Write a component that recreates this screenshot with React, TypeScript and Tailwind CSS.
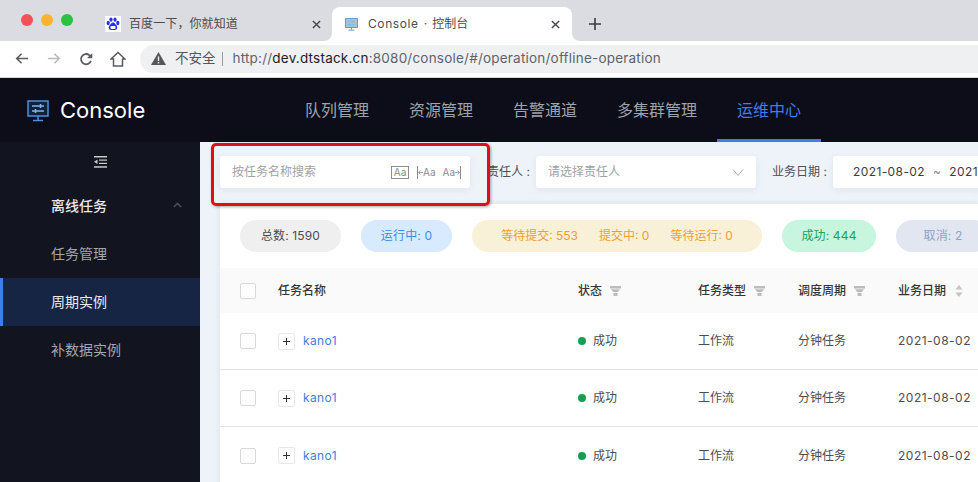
const CJK = "font-['Inter','Noto_Sans_CJK_SC',sans-serif]";

function MonitorIcon({ size }: { size: number }) {
  return (
    <svg width={size} height={size} viewBox="0 0 22 22" fill="none" stroke="#4a90e2" strokeWidth="1.5">
      <rect x="1" y="1" width="20" height="15" fill="#1f4a7a" fillOpacity="0.35" />
      <path d="M5 6h12M5 11h12" stroke="#7fb8f0" />
      <path d="M13.5 4v4M8.5 9v4" stroke="#7fb8f0" />
      <path d="M11 16v4M6 20.5h10" />
    </svg>
  );
}

function CloseIcon() {
  return (
    <svg width="9" height="9" viewBox="0 0 10 10" stroke="currentColor" strokeWidth="1.6"><path d="M1 1l8 8M9 1l-8 8" /></svg>
  );
}

function Tabs() {
  return (
    <div className="h-[41px] bg-[#dadce1] flex items-end relative">
      <div className="flex items-center gap-[8px] pl-[21px] absolute top-[14px] left-0">
        <span className="w-3 h-3 rounded-full bg-[#f4505a]" />
        <span className="w-3 h-3 rounded-full bg-[#fbb32f]" />
        <span className="w-3 h-3 rounded-full bg-[#2bc142]" />
      </div>
      <div className="ml-[105px] w-[227px] h-[34px] flex items-center text-[#4a4c50]">
        <svg width="16" height="16" viewBox="0 0 16 16" className="shrink-0">
          <rect width="16" height="16" fill="#fff" />
          <ellipse cx="3.2" cy="7" rx="1.6" ry="2.2" fill="#2932e1" />
          <ellipse cx="6" cy="3.6" rx="1.6" ry="2.2" fill="#2932e1" />
          <ellipse cx="10" cy="3.6" rx="1.6" ry="2.2" fill="#2932e1" />
          <ellipse cx="12.8" cy="7" rx="1.6" ry="2.2" fill="#2932e1" />
          <path d="M8 6.500c-2 0-2.200 2-3.500 3-1.400 1.200-.8 4.500 1.500 4.500h4c2.300 0 2.900-3.300 1.500-4.500-1.300-1-1.500-3-3.500-3z" fill="#2932e1" />
          <rect x="5.500" y="10" width="5" height="3" rx="1" fill="#fff" />
        </svg>
        <span className={`ml-[8px] text-[12px] tracking-[0.1px] ${CJK}`}>百度一下，你就知道</span>
        <span className="ml-auto mr-[11px] text-[#45474a]"><CloseIcon /></span>
      </div>
      <div className="relative w-[240px] h-[34px] bg-white rounded-t-[8px] flex items-center pl-[13px] text-[#4a4c50]">
        {/* the two little flares at the foot of the active tab */}
        <span className="absolute -left-[8px] bottom-0 w-[8px] h-[8px] bg-white"><span className="block w-full h-full bg-[#dadce1] rounded-br-[8px]" /></span>
        <span className="absolute -right-[8px] bottom-0 w-[8px] h-[8px] bg-white"><span className="block w-full h-full bg-[#dadce1] rounded-bl-[8px]" /></span>
        <MonitorIcon size={13} />
        <span className={`ml-[10px] text-[12px] whitespace-nowrap ${CJK}`}>
          <span className="tracking-[0.6px]">Console</span>
          <span className="mx-[5px]">·</span>
          <span>控制台</span>
        </span>
        <span className="ml-auto mr-[12px] text-[#45474a]"><CloseIcon /></span>
      </div>
      <div className="h-[34px] w-[13px] flex items-center justify-center ml-[16px] text-[#3a3c40]">
        <svg width="12" height="12" viewBox="0 0 12 12" stroke="currentColor" strokeWidth="1.600"><path d="M6 0v12M0 6h12" /></svg>
      </div>
    </div>
  );
}

function Toolbar() {
  return (
    <div className="h-[37px] bg-white border-b border-b-[#d4d5d7] flex items-center pb-[1px]">
      <div className="flex items-center w-[140px] pl-[15px] text-[#5a5c60]">
        <svg width="14" height="13" viewBox="0 0 16 14" fill="none" stroke="currentColor" strokeWidth="1.800"><path d="M15 7H2M7.500 1.500L2 7l5.500 5.500" /></svg>
        <svg className="ml-[18px]" width="14" height="13" viewBox="0 0 16 14" fill="none" stroke="#b9babc" strokeWidth="1.800"><path d="M1 7h13M8.500 1.500L14 7l-5.500 5.500" /></svg>
        <svg className="ml-[18px]" width="14" height="14" viewBox="0 0 15 15" fill="none" stroke="currentColor" strokeWidth="1.900"><path d="M12.800 9.500A5.500 5.500 0 1 1 11 3.300L13 5.500" /><path d="M14.200 1v5.700H8.500z" fill="currentColor" stroke="none" /></svg>
        <svg className="ml-[17px]" width="16" height="16" viewBox="0 0 16 16" fill="none" stroke="currentColor" strokeWidth="1.500"><path d="M1 8l7-6.500L15 8h-2.500v7h-9V8z" /></svg>
      </div>
      <div className={`w-[838px] h-[28px] bg-[#eff0f2] rounded-l-[14px] flex items-center pl-[11px] text-[13.500px] ${CJK}`}>
        <svg width="15" height="13" viewBox="0 0 15 13"><path d="M7.500 0L15 13H0z" fill="#55575a" /><rect x="6.800" y="4.500" width="1.400" height="4.500" fill="#eff0f2" /><rect x="6.800" y="10" width="1.400" height="1.400" fill="#eff0f2" /></svg>
        <span className="ml-[9px] text-[#55575a] text-[13.500px]">不安全</span>
        <span className="w-px h-[14px] bg-[#9a9b9e] ml-[6px] mr-[10px]" />
        <span className="text-[#5f6368] tracking-[0.21px]">http://<span className="text-[#202124]">dev.dtstack.cn</span>:8080/console/#/operation/offline-operation</span>
      </div>
    </div>
  );
}

function AppHeader() {
  const items = ["队列管理", "资源管理", "告警通道", "多集群管理"];
  return (
    <div className="h-[64px] bg-[#0c0d19] flex relative">
      <div className="flex items-center w-[285px] pl-[27px] pt-[1px]">
        <MonitorIcon size={22} />
        <span className="ml-[11px] text-white text-[22px] font-['Inter',sans-serif]">Console</span>
      </div>
      {items.map((t) => (
        <div key={t} className={`px-[20px] flex items-center text-[16px] text-[#9ea3ac] ${CJK}`}>{t}</div>
      ))}
      <div className={`px-[20px] flex items-center pt-[3px] text-[16px] text-[#3f7ee8] border-b-[3px] border-b-[#3f7ee8] ${CJK}`}>运维中心</div>
    </div>
  );
}

function Sidebar() {
  return (
    <div className={`w-[200px] shrink-0 bg-[#12141f] text-[14px] ${CJK}`}>
      <div className="h-[40px] flex items-center justify-center pb-[1px]">
        <svg width="13" height="12" viewBox="0 0 13 12" fill="#c9cacd">
          <rect width="13" height="1.500" />
          <rect x="5" y="3.500" width="8" height="1.200" />
          <rect x="5" y="6.800" width="8" height="1.200" />
          <rect y="10.200" width="13" height="1.500" />
          <path d="M3.500 3.500v4.500L0 5.800z" />
        </svg>
      </div>
      <div className="h-[48px] flex items-center pl-[51px] pr-[18px] pb-[2px] text-[#e6e7ea] font-medium">
        <span>离线任务</span>
        <svg className="ml-auto" width="9" height="6" viewBox="0 0 9 6" fill="none" stroke="#4f525c" strokeWidth="1.500"><path d="M.800 5L4.500 1.500 8.200 5" /></svg>
      </div>
      <div className="h-[48px] flex items-center pl-[51px] pb-[2px] text-[#a4a6ab]">任务管理</div>
      <div className="h-[48px] flex items-center pl-[48px] pb-[2px] text-[#e8eaee] bg-[#162544] border-l-[3px] border-l-[#3f7ee8]">周期实例</div>
      <div className="h-[48px] flex items-center pl-[51px] pb-[2px] text-[#a4a6ab]">补数据实例</div>
    </div>
  );
}

function ArrowTick({ flip }: { flip?: boolean }) {
  return (
    <svg width="5" height="5" viewBox="0 0 5 5" fill="none" stroke="#8b8d91" strokeWidth="0.8" className={flip ? "rotate-180" : ""}>
      <path d="M5 2.500H.5M2.500.5l-2 2 2 2" />
    </svg>
  );
}

function Filters() {
  return (
    <div className={`h-[62px] flex items-start pt-[14px] pl-[20px] text-[12px] ${CJK}`}>
      <div className="w-[250px] h-[32px] shrink-0 bg-white rounded-[3px] shadow-[0_2px_6px_rgba(120,140,170,0.12)] flex items-center pl-[12px] pr-[9px] text-[#a0a2a6]">
        <span>按任务名称搜索</span>
        <div className="ml-auto flex items-center text-[#8b8d91] font-['Inter',sans-serif] text-[10px] leading-none">
          <span className="w-[18px] h-[13px] border border-[#8b8d91] flex items-center justify-center">Aa</span>
          <span className="ml-[8px] w-[19px] h-[13px] border-l border-l-[#8b8d91] flex items-center"><ArrowTick />Aa</span>
          <span className="ml-[6px] w-[19px] h-[13px] border-r border-r-[#8b8d91] flex items-center justify-end">Aa<ArrowTick flip /></span>
        </div>
      </div>
      <span className="ml-[17px] w-[49px] shrink-0 h-[32px] flex items-center text-[#4d4f53]">责任人 :</span>
      <div className="w-[220px] h-[32px] shrink-0 bg-white rounded-[3px] shadow-[0_2px_6px_rgba(120,140,170,0.12)] flex items-center pl-[12px] pr-[12px] text-[#a0a2a6]">
        <span>请选择责任人</span>
        <svg className="ml-auto" width="12" height="7" viewBox="0 0 12 7" fill="none" stroke="#a8a9ad" strokeWidth="1"><path d="M1 .500l5 6 5-6" /></svg>
      </div>
      <span className="ml-[16px] h-[32px] w-[61px] shrink-0 flex items-center text-[#4d4f53] whitespace-nowrap">业务日期 :</span>
      <div className="w-[200px] h-[32px] shrink-0 bg-white rounded-[3px] shadow-[0_2px_6px_rgba(120,140,170,0.12)] flex items-center pl-[20px] text-[#3a3c40] whitespace-nowrap tracking-[0.4px]">
        <span>2021-08-02</span><span className="mx-[8px] text-[#8b8d91]">~</span><span>2021-08-02</span>
      </div>
    </div>
  );
}

function Pill({ cls, children }: { cls: string; children: React.ReactNode }) {
  return <div className={`h-[32px] rounded-full flex items-center justify-center shrink-0 whitespace-nowrap ${cls}`}>{children}</div>;
}

function Pills() {
  return (
    <div className={`h-[64px] flex items-center pl-[20px] gap-[20px] text-[12px] ${CJK}`}>
      <Pill cls="w-[101px] bg-[#efefef] text-[#4c4d50] tracking-[0.15px]">总数: 1590</Pill>
      <Pill cls="w-[91px] bg-[#d8eafd] text-[#3d8de8] tracking-[0.15px]">运行中: 0</Pill>
      <Pill cls="w-[290px] bg-[#f9f0d8] text-[#efa030] gap-[21px]">
        <span>等待提交: 553</span><span>提交中: 0</span><span>等待运行: 0</span>
      </Pill>
      <Pill cls="w-[94px] bg-[#c7f5de] text-[#16a35e] tracking-[0.15px]">成功: 444</Pill>
      <Pill cls="w-[94px] bg-[#e1e6f1] text-[#8fa3c4] tracking-[0.15px]">取消: 2</Pill>
    </div>
  );
}

function Funnel() {
  return (
    <svg width="11" height="10" viewBox="0 0 11 10" fill="#bcbcbc" className="ml-[8px]">
      <rect width="11" height="2.500" />
      <path d="M1 3.200h9L7.800 6H3.200z" />
      <rect x="3.500" y="6.800" width="4" height="3.200" />
    </svg>
  );
}

const colCls = "flex items-center shrink-0";

function TableHead() {
  return (
    <div className="h-[45px] bg-[#fafafa] flex items-center text-[12px] text-[#333538] font-medium">
      <div className="w-[58px] pl-[20px] shrink-0"><Check /></div>
      <div className={`${colCls} w-[300px]`}>任务名称</div>
      <div className={`${colCls} w-[120px]`}>状态<Funnel /></div>
      <div className={`${colCls} w-[100px]`}>任务类型<Funnel /></div>
      <div className={`${colCls} w-[100px]`}>调度周期<Funnel /></div>
      <div className={`${colCls} w-[90px]`}>
        业务日期
        <svg width="8" height="12" viewBox="0 0 8 12" fill="#c4c4c4" className="ml-[9px]"><path d="M4 0l3.500 4.500h-7zM4 12L.500 7.500h7z" /></svg>
      </div>
    </div>
  );
}

function Check() {
  return <span className="block w-[16px] h-[16px] bg-white border border-[#d9d9d9] rounded-[2px]" />;
}

function Row({ last }: { last?: boolean }) {
  return (
    <div className={`h-[57px] flex items-center text-[12px] text-[#4c4d50] shrink-0 ${last ? "" : "border-b border-b-[#e4e5e7]"}`}>
      <div className="w-[58px] pl-[20px] shrink-0"><Check /></div>
      <div className={`${colCls} w-[300px]`}>
        <span className="w-[17px] h-[17px] border border-[#e8e8e8] rounded-[2px] flex items-center justify-center">
          <svg width="7" height="7" viewBox="0 0 7 7" stroke="#333" strokeWidth="1"><path d="M3.500 0v7M0 3.500h7" /></svg>
        </span>
        <span className="ml-[8px] text-[#3f7ee0] tracking-[0.4px]">kano1</span>
      </div>
      <div className={`${colCls} w-[120px]`}>
        <span className="w-[8px] h-[8px] rounded-full bg-[#12a150]" />
        <span className="ml-[7px]">成功</span>
      </div>
      <div className={`${colCls} w-[100px]`}>工作流</div>
      <div className={`${colCls} w-[100px]`}>分钟任务</div>
      <div className={`${colCls} w-[90px] tracking-[0.5px] whitespace-nowrap`}>2021-08-02</div>
    </div>
  );
}

export default function App() {
  return (
    <div className={`w-[978px] h-[482px] overflow-hidden flex flex-col relative ${CJK}`}>
      <Tabs />
      <Toolbar />
      <AppHeader />
      <div className="flex flex-1 min-h-0">
        <Sidebar />
        <div className="flex-1 min-w-0 overflow-hidden bg-[#eef3f9]">
          <Filters />
          <div className={`ml-[20px] bg-white h-full shadow-[0_0_6px_rgba(120,140,170,0.2)] ${CJK}`}>
            <Pills />
            <TableHead />
            <Row />
            <Row />
            <Row last />
          </div>
        </div>
      </div>
      {/* red highlight drawn over the search box */}
      <div className="absolute left-[211px] top-[143px] w-[279px] h-[63px] border-[3px] border-[#dd1111] rounded-[5px] shadow-[1px_1px_3px_rgba(0,0,0,0.35)]" />
    </div>
  );
}
